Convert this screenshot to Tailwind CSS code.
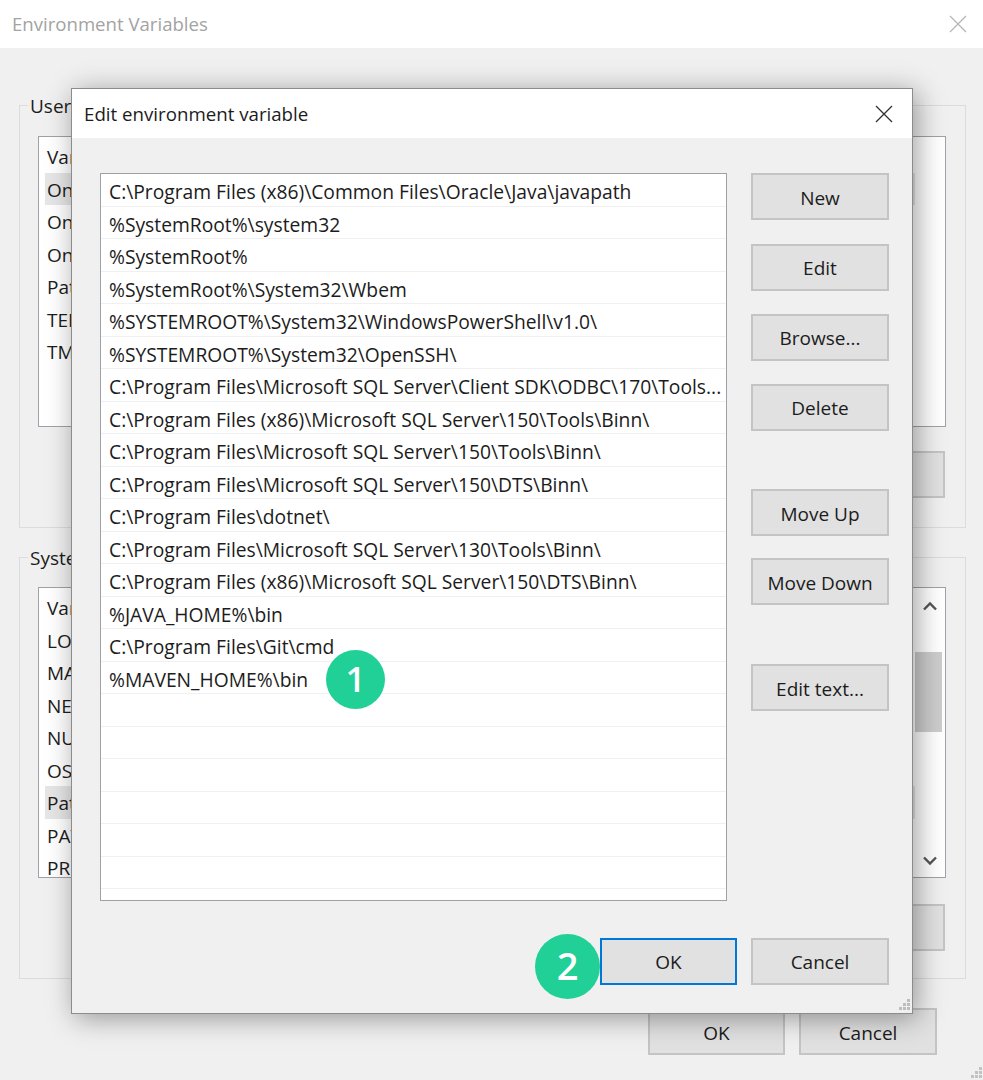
<!DOCTYPE html>
<html lang="en">
<head>
<meta charset="UTF-8" />
<title>Edit environment variable</title>
<script src="https://cdn.jsdelivr.net/npm/@tailwindcss/browser@4"></script>
</head>
<body class="bg-[#f0f0f0] font-['Open_Sans',sans-serif] text-[19px] text-[#1c1c1c]">
<div class="relative w-[983px] h-[1080px] overflow-hidden">

    <!-- Background window -->
    <div class="flex flex-col h-full">
        <div class="flex items-center justify-between h-12 bg-white pl-3 pr-4 text-[#a3a3a3]">
            <span class="text-[18.6px]">Environment Variables</span>
            <svg class="w-[18px] h-[18px]" viewBox="0 0 18 18" fill="none" stroke="#b5b5b5" stroke-width="1.2"><path d="M1 1l16 16M17 1L1 17" /></svg>
        </div>
        <div class="relative flex-1 px-[19px] pt-[57px]">
            <!-- User variables -->
            <div class="relative h-[423px] w-[947px] border border-[#dcdcdc] pl-[18px] pr-[19px] pt-[30px]">
                <span class="absolute left-[8px] top-[-12px] bg-[#f0f0f0] px-[2px] leading-6">User variables</span>
                <div class="h-[291px] border border-[#a0a0a8] bg-white pl-[6px] pr-[30px] pt-[3px]">
                    <div class="h-[32.5px] pl-[2px] pt-[2px] leading-[30px]">Variable</div>
                    <div class="h-[32.5px] pl-[2px] pt-[2px] leading-[30px] bg-[#e6e6e6]">OneDrive</div>
                    <div class="h-[32.5px] pl-[2px] pt-[2px] leading-[30px]">OneDriveConsumer</div>
                    <div class="h-[32.5px] pl-[2px] pt-[2px] leading-[30px]">OneDriveCommercial</div>
                    <div class="h-[32.5px] pl-[2px] pt-[2px] leading-[30px]">Path</div>
                    <div class="h-[32.5px] pl-[2px] pt-[2px] leading-[30px]">TEMP</div>
                    <div class="h-[32.5px] pl-[2px] pt-[2px] leading-[30px]">TMP</div>
                </div>
                <div class="flex justify-end mt-[24px] mr-[1px]">
                    <div class="w-[138px] h-[47px] border-2 border-[#c4c4c4] bg-[#e1e1e1]"></div>
                </div>
            </div>
            <!-- System variables -->
            <div class="relative h-[422px] w-[947px] border border-[#dcdcdc] mt-[29px] pl-[18px] pr-[19px] pt-[29px]">
                <span class="absolute left-[8px] top-[-12px] bg-[#f0f0f0] px-[2px] leading-6">System variables</span>
                <div class="flex h-[291px] border border-[#a0a0a8] bg-white pl-[6px] pt-[3px] overflow-hidden">
                    <div class="flex-1">
                        <div class="h-[32.5px] pl-[2px] pt-[2px] leading-[30px]">Variable</div>
                        <div class="h-[32.5px] pl-[2px] pt-[2px] leading-[30px]">LOCALAPPDATA</div>
                        <div class="h-[32.5px] pl-[2px] pt-[2px] leading-[30px]">MAVEN_HOME</div>
                        <div class="h-[32.5px] pl-[2px] pt-[2px] leading-[30px]">NEW</div>
                        <div class="h-[32.5px] pl-[2px] pt-[2px] leading-[30px]">NUMBER</div>
                        <div class="h-[32.5px] pl-[2px] pt-[2px] leading-[30px]">OS</div>
                        <div class="h-[32.5px] pl-[2px] pt-[2px] leading-[30px] bg-[#e6e6e6]">Path</div>
                        <div class="h-[32.5px] pl-[2px] pt-[2px] leading-[30px]">PATHEXT</div>
                        <div class="h-[32.5px] pl-[2px] pt-[2px] leading-[30px]">PROCESSOR</div>
                    </div>
                    <div class="flex flex-col items-center justify-between w-[30px] -mt-[3px] pt-[13px] pb-[11px]">
                        <svg class="w-[14px] h-[10px]" viewBox="0 0 14 10" fill="none" stroke="#555" stroke-width="2.4"><path d="M1 8.5l6-6 6 6" /></svg>
                        <svg class="w-[14px] h-[10px]" viewBox="0 0 14 10" fill="none" stroke="#555" stroke-width="2.4"><path d="M1 1.5l6 6 6-6" /></svg>
                    </div>
                </div>
                <div class="flex justify-end mt-[26px] mr-[1px]">
                    <div class="w-[138px] h-[47px] border-2 border-[#c4c4c4] bg-[#e1e1e1]"></div>
                </div>
            </div>
            <div class="flex justify-end gap-[14px] mt-[29px] pr-[27px]">
                <div class="flex items-center justify-center w-[137px] h-[47px] pt-[3px] border-2 border-[#c4c4c4] bg-[#e1e1e1]">OK</div>
                <div class="flex items-center justify-center w-[138px] h-[47px] pt-[3px] border-2 border-[#c4c4c4] bg-[#e1e1e1]">Cancel</div>
            </div>
        </div>
    </div>
    <div class="absolute left-[970px] top-[1067px] w-[13px] h-[13px]">
        <svg viewBox="0 0 13 13" fill="#c2c2c2"><path d="M9 0h3v3H9zM5 4h3v3H5zM9 4h3v3H9zM1 8h3v3H1zM5 8h3v3H5zM9 8h3v3H9z" /></svg>
    </div>

    <!-- Scrollbar thumb of the system list -->
    <div class="absolute left-[915px] top-[652px] w-[27px] h-[80px] bg-[#cdcdcd]"></div>

    <!-- Edit dialog -->
    <div class="absolute left-[71px] top-[88px] flex flex-col w-[842px] h-[926px] border border-[#8c8c8c] bg-[#f0f0f0] shadow-[4px_4px_26px_rgba(0,0,0,0.38)]">
        <div class="flex items-center justify-between h-[49px] shrink-0 bg-white pl-3 pr-[19px]">
            <span class="text-[18.7px] pt-[1px]">Edit environment variable</span>
            <svg class="w-[18px] h-[18px]" viewBox="0 0 18 18" fill="none" stroke="#333" stroke-width="1.3"><path d="M1 1l16 16M17 1L1 17" /></svg>
        </div>
        <div class="flex flex-1 pl-[28px] pr-[23px] pt-[35px]">
            <div class="w-[627px] h-[728px] border border-[#a0a0a8] bg-white text-[19.25px] leading-[29px] overflow-hidden">
                <div class="h-[32.5px] border-b border-[#f0f0f0] pl-[8px] pt-[3px] whitespace-nowrap">C:\Program Files (x86)\Common Files\Oracle\Java\javapath</div>
                <div class="h-[32.5px] border-b border-[#f0f0f0] pl-[8px] pt-[3px] whitespace-nowrap">%SystemRoot%\system32</div>
                <div class="h-[32.5px] border-b border-[#f0f0f0] pl-[8px] pt-[3px] whitespace-nowrap">%SystemRoot%</div>
                <div class="h-[32.5px] border-b border-[#f0f0f0] pl-[8px] pt-[3px] whitespace-nowrap">%SystemRoot%\System32\Wbem</div>
                <div class="h-[32.5px] border-b border-[#f0f0f0] pl-[8px] pt-[3px] whitespace-nowrap">%SYSTEMROOT%\System32\WindowsPowerShell\v1.0\</div>
                <div class="h-[32.5px] border-b border-[#f0f0f0] pl-[8px] pt-[3px] whitespace-nowrap">%SYSTEMROOT%\System32\OpenSSH\</div>
                <div class="h-[32.5px] border-b border-[#f0f0f0] pl-[8px] pt-[3px] whitespace-nowrap">C:\Program Files\Microsoft SQL Server\Client SDK\ODBC\170\Tools...</div>
                <div class="h-[32.5px] border-b border-[#f0f0f0] pl-[8px] pt-[3px] whitespace-nowrap">C:\Program Files (x86)\Microsoft SQL Server\150\Tools\Binn\</div>
                <div class="h-[32.5px] border-b border-[#f0f0f0] pl-[8px] pt-[3px] whitespace-nowrap">C:\Program Files\Microsoft SQL Server\150\Tools\Binn\</div>
                <div class="h-[32.5px] border-b border-[#f0f0f0] pl-[8px] pt-[3px] whitespace-nowrap">C:\Program Files\Microsoft SQL Server\150\DTS\Binn\</div>
                <div class="h-[32.5px] border-b border-[#f0f0f0] pl-[8px] pt-[3px] whitespace-nowrap">C:\Program Files\dotnet\</div>
                <div class="h-[32.5px] border-b border-[#f0f0f0] pl-[8px] pt-[3px] whitespace-nowrap">C:\Program Files\Microsoft SQL Server\130\Tools\Binn\</div>
                <div class="h-[32.5px] border-b border-[#f0f0f0] pl-[8px] pt-[3px] whitespace-nowrap">C:\Program Files (x86)\Microsoft SQL Server\150\DTS\Binn\</div>
                <div class="h-[32.5px] border-b border-[#f0f0f0] pl-[8px] pt-[3px] whitespace-nowrap">%JAVA_HOME%\bin</div>
                <div class="h-[32.5px] border-b border-[#f0f0f0] pl-[8px] pt-[3px] whitespace-nowrap">C:\Program Files\Git\cmd</div>
                <div class="h-[32.5px] border-b border-[#f0f0f0] pl-[8px] pt-[3px] whitespace-nowrap">%MAVEN_HOME%\bin</div>
                <div class="h-[32.5px] border-b border-[#f0f0f0]"></div>
                <div class="h-[32.5px] border-b border-[#f0f0f0]"></div>
                <div class="h-[32.5px] border-b border-[#f0f0f0]"></div>
                <div class="h-[32.5px] border-b border-[#f0f0f0]"></div>
                <div class="h-[32.5px] border-b border-[#f0f0f0]"></div>
                <div class="h-[32.5px] border-b border-[#f0f0f0]"></div>
            </div>
            <div class="flex flex-col w-[138px] ml-[24px]">
                <div class="flex items-center justify-center h-[47px] pt-[3px] border-2 border-[#c4c4c4] bg-[#e1e1e1]">New</div>
                <div class="flex items-center justify-center h-[47px] pt-[2px] mt-[24px] border-2 border-[#c4c4c4] bg-[#e1e1e1]">Edit</div>
                <div class="flex items-center justify-center h-[47px] pt-[2px] mt-[23px] border-2 border-[#c4c4c4] bg-[#e1e1e1]">Browse...</div>
                <div class="flex items-center justify-center h-[47px] pt-[2px] mt-[23px] border-2 border-[#c4c4c4] bg-[#e1e1e1]">Delete</div>
                <div class="flex items-center justify-center h-[47px] pt-[3px] mt-[58px] border-2 border-[#c4c4c4] bg-[#e1e1e1]">Move Up</div>
                <div class="flex items-center justify-center h-[47px] pt-[3px] mt-[22px] border-2 border-[#c4c4c4] bg-[#e1e1e1]">Move Down</div>
                <div class="flex items-center justify-center h-[47px] pt-[3px] mt-[59px] border-2 border-[#c4c4c4] bg-[#e1e1e1]">Edit text...</div>
            </div>
        </div>
        <div class="flex justify-end gap-[14px] pr-[23px] pb-[28px]">
            <div class="flex items-center justify-center w-[137px] h-[47px] pt-[2px] border-2 border-[#0078d7] bg-[#e1e1e1]">OK</div>
            <div class="flex items-center justify-center w-[138px] h-[47px] pt-[2px] border-2 border-[#c4c4c4] bg-[#e1e1e1]">Cancel</div>
        </div>
        <svg class="absolute right-[1px] bottom-[1px] w-[13px] h-[13px]" viewBox="0 0 13 13" fill="#bdbdbd"><path d="M9 0h3v3H9zM5 4h3v3H5zM9 4h3v3H9zM1 8h3v3H1zM5 8h3v3H5zM9 8h3v3H9z" /></svg>
    </div>

    <!-- Step badges -->
    <div class="absolute left-[326px] top-[650px] flex items-center justify-center w-[59px] h-[59px] pb-[1px] rounded-full bg-[#20d096] text-white text-[35px] font-semibold">1</div>
    <div class="absolute left-[535px] top-[934px] flex items-center justify-center w-[65px] h-[65px] pb-[2px] rounded-full bg-[#20d096] text-white text-[38px] font-semibold">2</div>
</div>
</body>
</html>
